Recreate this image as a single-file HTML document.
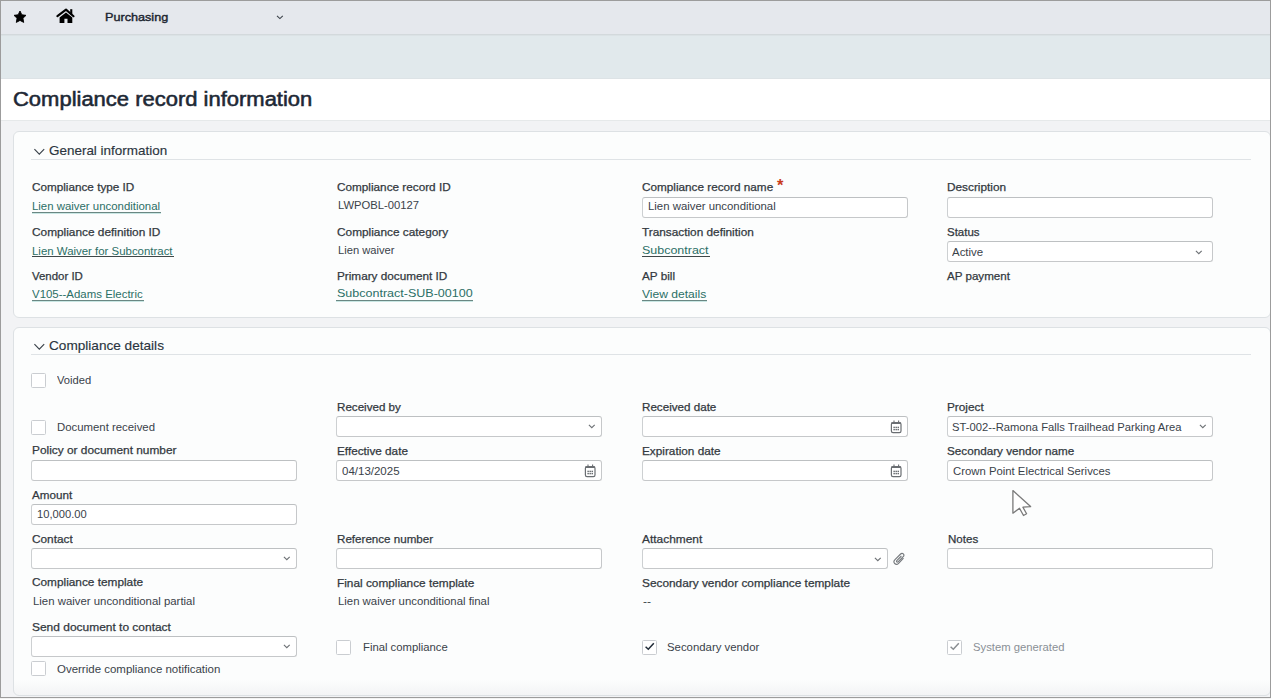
<!DOCTYPE html>
<html><head><meta charset="utf-8"><style>
html,body{margin:0;padding:0}
body{width:1271px;height:699px;overflow:hidden;position:relative;background:#f2f3f5;font-family:"Liberation Sans",sans-serif;}
div,svg{position:absolute;box-sizing:content-box}
.topbar{left:0;top:0;width:1271px;height:34px;background:#e5e8ed;border-bottom:1px solid #d3d9dc}
.subbar{left:0;top:35px;width:1271px;height:43px;background:#e1e9ec;border-bottom:1px solid #dde3e6;box-shadow:inset 0 1px 0 #dbe2e5}
.titlebar{left:0;top:79px;width:1271px;height:41px;background:#fff;border-bottom:1px solid #e6e9ea}
.title{left:13px;top:87px;font-size:20px;line-height:24px;color:#1d2838;white-space:nowrap;transform:scaleX(1.099);transform-origin:0 0;-webkit-text-stroke:0.55px #1f2933}
.panel{background:#fcfdfd;border:1px solid #dde1e4;border-radius:6px}
.p2{background:linear-gradient(#fcfdfd 0,#fcfdfd 352px,#f3f4f5 367px)}
.ph{font-size:13px;line-height:15px;color:#2b3540;white-space:nowrap;transform-origin:0 0;-webkit-text-stroke:0.15px #2b3540}
.uline{height:1px;background:#dfe3e6}
.lbl{font-size:11px;line-height:13px;color:#33393f;white-space:nowrap;transform-origin:0 0;-webkit-text-stroke:0.25px #33393f}
.val{font-size:11px;line-height:13px;color:#3a424a;white-space:nowrap;transform-origin:0 0}
.lnk{color:#2b6f66}
.ul{height:1px;background:#6a8783;box-shadow:0 1px 0 rgba(140,205,198,0.45)}
.dk{background:#3e4848;box-shadow:none}
.dis{color:#8a9096}
.req{color:#c93c1c;font-size:16.5px;line-height:14px;font-weight:bold}
.inp{background:#fff;border:1px solid #c6c8ca;border-top-color:#bdc0c2;border-left-color:#cdd0d2;border-radius:3px}
.cb{width:13px;height:13px;border:1px solid #cacdd1;border-radius:1.5px;background:#fff}
.frame{left:0;top:0;width:1269px;height:696px;border:1px solid #9c9c9c}
.below{left:0;top:698px;width:1271px;height:1px;background:#f2f2f2}
</style></head><body>
<div class="topbar"></div>
<svg style="left:13px;top:10px" width="14" height="14" viewBox="0 0 14 14"><path d="M7.00 1.00 L8.82 4.79 L12.99 5.35 L9.95 8.26 L10.70 12.40 L7.00 10.40 L3.30 12.40 L4.05 8.26 L1.01 5.35 L5.18 4.79 Z" fill="#000" stroke="#000" stroke-width="0.9" stroke-linejoin="round"/></svg>
<svg style="left:56px;top:8px" width="19" height="16" viewBox="0 0 19 16"><path d="M1.4 8.2 L10 1.6 L17.5 8.2" fill="none" stroke="#000" stroke-width="2.1" stroke-linecap="round" stroke-linejoin="round"/><rect x="14.2" y="1.2" width="2.1" height="5" fill="#000"/><path d="M3.6 9.4 L10 4.4 L16.3 9.4 L16.3 15 L11.5 15 L11.5 10.8 L8.4 10.8 L8.4 15 L3.6 15 Z" fill="#000"/></svg>
<div style="left:104.50px;top:10px;font-size:11.6px;line-height:14px;color:#1c2530;transform:scaleX(1.0897);transform-origin:0 0;-webkit-text-stroke:0.4px #1c2530;white-space:nowrap">Purchasing</div>
<svg style="left:276.3px;top:14.6px" width="8" height="5" viewBox="0 0 8 5"><path d="M1 0.9 L3.9 3.6 L6.8 0.9" fill="none" stroke="#3a4048" stroke-width="1.1"/></svg>
<div class="subbar"></div>
<div class="titlebar"></div>
<div class="title">Compliance record information</div>
<div class="panel" style="left:13px;top:131px;width:1256px;height:185px"></div>
<svg style="left:34px;top:148px" width="11" height="7" viewBox="0 0 11 7"><path d="M0.4 1.1 L5.3 6.1 L10.2 1.1" fill="none" stroke="#3a424a" stroke-width="1.15"/></svg>
<div class="ph" style="left:49.40px;top:143.0px;font-size:13.5px;transform:scaleX(0.9962)">General information</div>
<div class="uline" style="left:31px;top:159px;width:1220px"></div>
<div class="panel p2" style="left:13px;top:327px;width:1256px;height:367px"></div>
<svg style="left:34px;top:343px" width="11" height="7" viewBox="0 0 11 7"><path d="M0.4 1.1 L5.3 6.1 L10.2 1.1" fill="none" stroke="#3a424a" stroke-width="1.15"/></svg>
<div class="ph" style="left:49.30px;top:338.2px;font-size:13.5px;transform:scaleX(1.0078)">Compliance details</div>
<div class="uline" style="left:31px;top:354px;width:1220px"></div>
<div class="lbl" style="left:31.50px;top:181px;transform:scaleX(1.0656)">Compliance type ID</div>
<div class="val lnk" style="left:32.40px;top:200px;transform:scaleX(1.0364)">Lien waiver unconditional</div>
<div class="ul" style="left:31.9px;top:212px;width:129px"></div>
<div class="lbl" style="left:31.50px;top:226px;transform:scaleX(1.0772)">Compliance definition ID</div>
<div class="val lnk" style="left:32.40px;top:245px;transform:scaleX(1.0384)">Lien Waiver for Subcontract</div>
<div class="ul dk" style="left:31.9px;top:256px;width:142px"></div>
<div class="lbl" style="left:31.50px;top:270px;transform:scaleX(1.0389)">Vendor ID</div>
<div class="val lnk" style="left:32.40px;top:288px;transform:scaleX(1.0404)">V105--Adams Electric</div>
<div class="ul" style="left:31.9px;top:300px;width:112px"></div>
<div class="lbl" style="left:336.90px;top:181px;transform:scaleX(1.0686)">Compliance record ID</div>
<div class="val" style="left:337.80px;top:199px;transform:scaleX(1.0227)">LWPOBL-00127</div>
<div class="lbl" style="left:336.90px;top:226px;transform:scaleX(1.0765)">Compliance category</div>
<div class="val" style="left:337.80px;top:244px;transform:scaleX(1.0144)">Lien waiver</div>
<div class="lbl" style="left:336.90px;top:270px;transform:scaleX(1.0678)">Primary document ID</div>
<div class="val lnk" style="left:336.70px;top:287px;transform:scaleX(1.1376)">Subcontract-SUB-00100</div>
<div class="ul" style="left:336.2px;top:300px;width:137px"></div>
<div class="lbl" style="left:642.10px;top:181px;transform:scaleX(1.0675)">Compliance record name</div>
<div class="req" style="left:777px;top:177.5px">*</div>
<div class="inp" style="left:642px;top:197px;width:264px;height:19px"></div>
<div class="val" style="left:647.50px;top:200px;transform:scaleX(1.0340)">Lien waiver unconditional</div>
<div class="lbl" style="left:642.10px;top:226px;transform:scaleX(1.0730)">Transaction definition</div>
<div class="val lnk" style="left:642.10px;top:244px;transform:scaleX(1.1329)">Subcontract</div>
<div class="ul dk" style="left:641.6px;top:256px;width:68px"></div>
<div class="lbl" style="left:642.10px;top:270px;transform:scaleX(1.0645)">AP bill</div>
<div class="val lnk" style="left:642.10px;top:288px;transform:scaleX(1.0974)">View details</div>
<div class="ul" style="left:641.6px;top:300px;width:65px"></div>
<div class="lbl" style="left:947.40px;top:181px;transform:scaleX(1.0727)">Description</div>
<div class="inp" style="left:947px;top:197px;width:264px;height:19px"></div>
<div class="lbl" style="left:947.40px;top:226px;transform:scaleX(1.0449)">Status</div>
<div class="inp" style="left:947px;top:241px;width:264px;height:19px"></div>
<div class="val" style="left:952.10px;top:246px;transform:scaleX(1.0400)">Active</div>
<svg style="left:1194.8px;top:249.6px" width="8" height="5" viewBox="0 0 8 5"><path d="M0.9 0.9 L3.8 3.7 L6.7 0.9" fill="none" stroke="#6e7276" stroke-width="1.15"/></svg>
<div class="lbl" style="left:947.40px;top:270px;transform:scaleX(1.0536)">AP payment</div>
<div class="cb" style="left:31px;top:373px"></div>
<div class="val" style="left:56.90px;top:374px;transform:scaleX(1.0179)">Voided</div>
<div class="lbl" style="left:337.10px;top:401px;transform:scaleX(1.0545)">Received by</div>
<div class="inp" style="left:336px;top:416px;width:264px;height:19px"></div>
<svg style="left:587.8px;top:423.5px" width="8" height="5" viewBox="0 0 8 5"><path d="M0.9 0.9 L3.8 3.7 L6.7 0.9" fill="none" stroke="#6e7276" stroke-width="1.15"/></svg>
<div class="lbl" style="left:642.40px;top:401px;transform:scaleX(1.0569)">Received date</div>
<div class="inp" style="left:642px;top:416px;width:264px;height:19px"></div>
<svg style="left:889px;top:419px" width="14" height="15" viewBox="0 0 14 15"><rect x="2.4" y="3.6" width="9.6" height="10" rx="1.6" fill="none" stroke="#6a6e72" stroke-width="1.2"/><rect x="2.4" y="3.4" width="9.6" height="1.6" fill="#6a6e72"/><line x1="5" y1="1.6" x2="5" y2="3.8" stroke="#6a6e72" stroke-width="1.1"/><line x1="9.6" y1="1.6" x2="9.6" y2="3.8" stroke="#6a6e72" stroke-width="1.1"/><g fill="#6a6e72"><rect x="4.4" y="7.7" width="1.5" height="1.4"/><rect x="6.45" y="7.7" width="1.5" height="1.4"/><rect x="8.5" y="7.7" width="1.5" height="1.4"/><rect x="4.4" y="9.9" width="1.5" height="1.4"/><rect x="6.45" y="9.9" width="1.5" height="1.4"/><rect x="8.5" y="9.9" width="1.5" height="1.4"/></g></svg>
<div class="lbl" style="left:947.30px;top:401px;transform:scaleX(1.0731)">Project</div>
<div class="inp" style="left:947px;top:416px;width:264px;height:19px"></div>
<svg style="left:1198.7px;top:423.7px" width="8" height="5" viewBox="0 0 8 5"><path d="M0.9 0.9 L3.8 3.7 L6.7 0.9" fill="none" stroke="#6e7276" stroke-width="1.15"/></svg>
<div class="val" style="left:952.40px;top:421px;transform:scaleX(1.0200)">ST-002--Ramona Falls Trailhead Parking Area</div>
<div class="cb" style="left:31px;top:420px"></div>
<div class="val" style="left:56.90px;top:421px;transform:scaleX(1.0338)">Document received</div>
<div class="lbl" style="left:31.60px;top:444px;transform:scaleX(1.0792)">Policy or document number</div>
<div class="inp" style="left:31px;top:460px;width:264px;height:19px"></div>
<div class="lbl" style="left:337.10px;top:445px;transform:scaleX(1.0677)">Effective date</div>
<div class="inp" style="left:336px;top:460px;width:264px;height:19px"></div>
<svg style="left:583px;top:463px" width="14" height="15" viewBox="0 0 14 15"><rect x="2.4" y="3.6" width="9.6" height="10" rx="1.6" fill="none" stroke="#6a6e72" stroke-width="1.2"/><rect x="2.4" y="3.4" width="9.6" height="1.6" fill="#6a6e72"/><line x1="5" y1="1.6" x2="5" y2="3.8" stroke="#6a6e72" stroke-width="1.1"/><line x1="9.6" y1="1.6" x2="9.6" y2="3.8" stroke="#6a6e72" stroke-width="1.1"/><g fill="#6a6e72"><rect x="4.4" y="7.7" width="1.5" height="1.4"/><rect x="6.45" y="7.7" width="1.5" height="1.4"/><rect x="8.5" y="7.7" width="1.5" height="1.4"/><rect x="4.4" y="9.9" width="1.5" height="1.4"/><rect x="6.45" y="9.9" width="1.5" height="1.4"/><rect x="8.5" y="9.9" width="1.5" height="1.4"/></g></svg>
<div class="val" style="left:342.00px;top:465px;transform:scaleX(1.0454)">04/13/2025</div>
<div class="lbl" style="left:642.40px;top:445px;transform:scaleX(1.0708)">Expiration date</div>
<div class="inp" style="left:642px;top:460px;width:264px;height:19px"></div>
<svg style="left:889px;top:463px" width="14" height="15" viewBox="0 0 14 15"><rect x="2.4" y="3.6" width="9.6" height="10" rx="1.6" fill="none" stroke="#6a6e72" stroke-width="1.2"/><rect x="2.4" y="3.4" width="9.6" height="1.6" fill="#6a6e72"/><line x1="5" y1="1.6" x2="5" y2="3.8" stroke="#6a6e72" stroke-width="1.1"/><line x1="9.6" y1="1.6" x2="9.6" y2="3.8" stroke="#6a6e72" stroke-width="1.1"/><g fill="#6a6e72"><rect x="4.4" y="7.7" width="1.5" height="1.4"/><rect x="6.45" y="7.7" width="1.5" height="1.4"/><rect x="8.5" y="7.7" width="1.5" height="1.4"/><rect x="4.4" y="9.9" width="1.5" height="1.4"/><rect x="6.45" y="9.9" width="1.5" height="1.4"/><rect x="8.5" y="9.9" width="1.5" height="1.4"/></g></svg>
<div class="lbl" style="left:947.30px;top:445px;transform:scaleX(1.0626)">Secondary vendor name</div>
<div class="inp" style="left:947px;top:460px;width:264px;height:19px"></div>
<div class="val" style="left:952.50px;top:465px;transform:scaleX(1.0301)">Crown Point Electrical Serivces</div>
<div class="lbl" style="left:31.60px;top:489px;transform:scaleX(1.0607)">Amount</div>
<div class="inp" style="left:31px;top:504px;width:264px;height:19px"></div>
<div class="val" style="left:37.30px;top:508px;transform:scaleX(1.0143)">10,000.00</div>
<div class="lbl" style="left:31.90px;top:533px;transform:scaleX(1.0739)">Contact</div>
<div class="inp" style="left:31px;top:548px;width:264px;height:19px"></div>
<svg style="left:283.2px;top:556.2px" width="8" height="5" viewBox="0 0 8 5"><path d="M0.9 0.9 L3.8 3.7 L6.7 0.9" fill="none" stroke="#6e7276" stroke-width="1.15"/></svg>
<div class="lbl" style="left:336.90px;top:533px;transform:scaleX(1.0549)">Reference number</div>
<div class="inp" style="left:336px;top:548px;width:264px;height:19px"></div>
<div class="lbl" style="left:642.20px;top:533px;transform:scaleX(1.0827)">Attachment</div>
<div class="inp" style="left:642px;top:548px;width:244px;height:19px"></div>
<svg style="left:873.5px;top:556.6px" width="8" height="5" viewBox="0 0 8 5"><path d="M0.9 0.9 L3.8 3.7 L6.7 0.9" fill="none" stroke="#6e7276" stroke-width="1.15"/></svg>
<div class="lbl" style="left:947.60px;top:533px;transform:scaleX(1.0523)">Notes</div>
<div class="inp" style="left:947px;top:548px;width:264px;height:19px"></div>
<div class="lbl" style="left:31.90px;top:576px;transform:scaleX(1.0745)">Compliance template</div>
<div class="val" style="left:33.00px;top:595px;transform:scaleX(1.0345)">Lien waiver unconditional partial</div>
<div class="lbl" style="left:336.90px;top:577px;transform:scaleX(1.0743)">Final compliance template</div>
<div class="val" style="left:338.00px;top:595px;transform:scaleX(1.0320)">Lien waiver unconditional final</div>
<div class="lbl" style="left:642.20px;top:577px;transform:scaleX(1.0766)">Secondary vendor compliance template</div>
<div class="val" style="left:642.90px;top:595px;transform:scaleX(1.0959)">--</div>
<div class="lbl" style="left:31.90px;top:621px;transform:scaleX(1.0869)">Send document to contact</div>
<div class="inp" style="left:31px;top:636px;width:264px;height:19px"></div>
<svg style="left:283.2px;top:644.3px" width="8" height="5" viewBox="0 0 8 5"><path d="M0.9 0.9 L3.8 3.7 L6.7 0.9" fill="none" stroke="#6e7276" stroke-width="1.15"/></svg>
<div class="cb" style="left:336px;top:640px"></div>
<div class="val" style="left:362.50px;top:641px;transform:scaleX(1.0267)">Final compliance</div>
<div class="cb" style="left:642px;top:640px"></div>
<svg style="left:643px;top:641px" width="13" height="13" viewBox="0 0 13 13"><path d="M2.6 5.8 L5.3 8.3 L10.8 2.2" fill="none" stroke="#1f2a36" stroke-width="1.5"/></svg>
<div class="val" style="left:667.40px;top:641px;transform:scaleX(1.0336)">Secondary vendor</div>
<div class="cb" style="left:947px;top:640px"></div>
<svg style="left:948px;top:641px" width="13" height="13" viewBox="0 0 13 13"><path d="M2.6 5.8 L5.3 8.3 L10.8 2.2" fill="none" stroke="#8a8e92" stroke-width="1.5"/></svg>
<div class="val dis" style="left:972.50px;top:641px;transform:scaleX(1.0246)">System generated</div>
<div class="cb" style="left:31px;top:661px"></div>
<div class="val" style="left:57.00px;top:663px;transform:scaleX(1.0435)">Override compliance notification</div>
<svg style="left:893px;top:551.5px" width="14" height="15" viewBox="0 0 14 15"><path d="M10.5 6.2 L5.6 11.3 C4.4 12.5 2.7 12.5 1.7 11.5 C0.7 10.5 0.8 8.8 2 7.6 L7.6 2 C8.4 1.2 9.6 1.2 10.3 1.9 C11 2.6 11 3.8 10.2 4.6 L5 9.8 C4.6 10.2 4 10.2 3.7 9.9 C3.4 9.6 3.4 9 3.8 8.6 L8.4 4" fill="none" stroke="#74787c" stroke-width="1.1"/></svg>
<svg style="left:1008px;top:486px" width="28" height="34" viewBox="0 0 28 34"><path d="M4.9 4.6 L4.9 27.2 L11.5 22.3 L15.5 29.5 L18.6 27.8 L14.9 21.2 L22.6 20.6 Z" fill="#fff" stroke="#7a7a7a" stroke-width="1.3" stroke-linejoin="round"/></svg>
<div class="frame"></div><div class="below"></div>
</body></html>
